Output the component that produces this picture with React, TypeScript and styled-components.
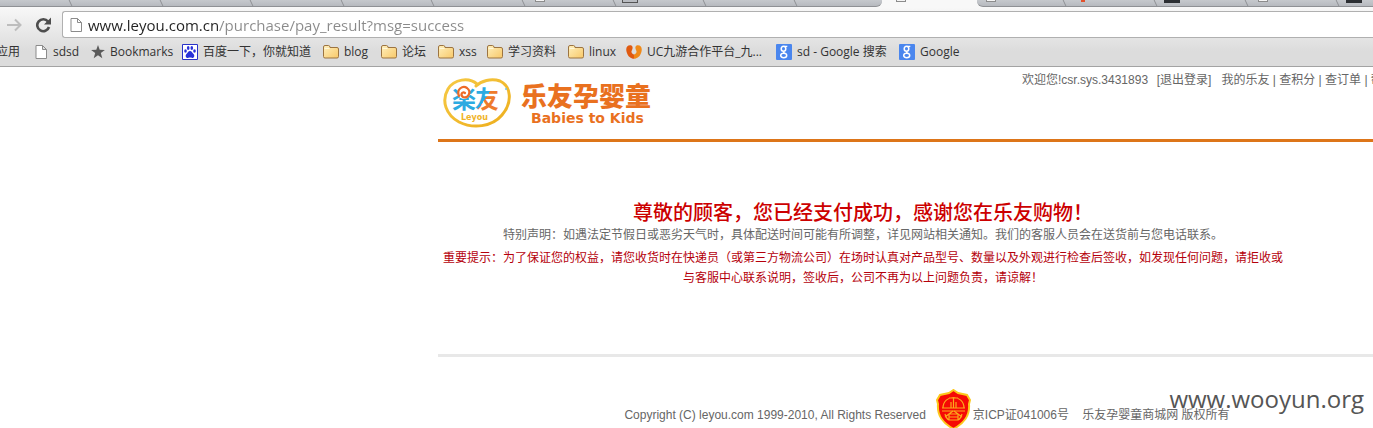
import React from "react";
import styled, { createGlobalStyle } from "styled-components";

const GlobalStyle = createGlobalStyle`
  * { box-sizing: border-box; }
  body {
    margin: 0;
    background: #fff;
    color: #666;
    font: 12px/20px "Liberation Sans", "Noto Sans CJK SC", sans-serif;
    overflow: hidden;
  }
  h1, p { margin: 0; font-weight: 400; }
`;

const uiFont = `"Open Sans", "Noto Sans CJK SC", sans-serif`;

/* Browser chrome */

const TabStrip = styled.div`
  display: flex;
  height: 7px;
  overflow: hidden;
  background: #f8f8f8;
`;

const Tab = styled.div<{ $width: number; $active?: boolean; $indent?: number; $corner?: string }>`
  position: relative;
  flex: none;
  width: ${(p) => p.$width}px;
  height: 7px;
  padding-left: ${(p) => p.$indent ?? 18}px;
  background: ${(p) => (p.$active ? "#f8f8f8" : "linear-gradient(#c6c9cd, #b7babf)")};
  border-bottom: ${(p) => (p.$active ? "0" : "1px solid #8f9195")};
  border-radius: ${(p) => p.$corner ?? "0"};
  &::after {
    content: "";
    display: ${(p) => (p.$active || p.$corner === "0 0 6px 0" ? "none" : "block")};
    position: absolute;
    right: 0;
    top: 0;
    width: 4px;
    height: 6px;
    border-left: 1px solid #8f9195;
    transform: skewX(25deg);
  }
`;

const TabIcon = styled.div<{ $kind: "page" | "dark" | "frame" | "red" }>`
  width: ${(p) => (p.$kind === "page" ? 10 : p.$kind === "red" ? 4 : 16)}px;
  height: ${(p) => (p.$kind === "dark" || p.$kind === "frame" ? 3 : 2)}px;
  background: ${(p) => ({ page: "#f5f5f5", dark: "#2c2f33", frame: "#b9bcc1", red: "#e2512c" })[p.$kind]};
  border: solid ${(p) => (p.$kind === "frame" ? "#555" : "#8c8c8c")};
  border-width: ${(p) => (p.$kind === "page" || p.$kind === "frame" ? "0 1px 1px" : "0")};
`;

const Toolbar = styled.div`
  height: 60px;
  padding-top: 4px;
  background: linear-gradient(#f8f8f8, #dcdcdc 75%);
  border-bottom: 1px solid #a3a3a3;
  font-family: ${uiFont};
`;

const AddressRow = styled.div`
  display: flex;
  align-items: center;
  height: 27px;
  padding-left: 6px;
`;

const ToolButton = styled.button`
  display: flex;
  width: 29px;
  padding: 0;
  border: 0;
  background: none;
`;

const AddressField = styled.label`
  flex: 1;
  display: flex;
  align-items: center;
  gap: 5px;
  height: 27px;
  margin-left: -2px;
  padding-left: 7px;
  background: #fff;
  border: 1px solid #b0b0b0;
  border-right: 0;
  border-radius: 3px 0 0 3px;
`;

const AddressInput = styled.input`
  flex: 1;
  height: 24px;
  padding: 0;
  border: 0;
  outline: 0;
  font: 15px/24px ${uiFont};
  color: transparent;
  background: linear-gradient(90deg, #222 130px, #8a8a8a 130px);
  -webkit-background-clip: text;
  background-clip: text;
`;

const BookmarkBar = styled.nav`
  display: flex;
  align-items: center;
  gap: 12px;
  height: 28px;
  overflow: hidden;
`;

const Bookmark = styled.a<{ $width: number; $clipStart?: boolean }>`
  flex: none;
  display: flex;
  align-items: center;
  justify-content: ${(p) => (p.$clipStart ? "flex-end" : "flex-start")};
  gap: 5px;
  width: ${(p) => p.$width}px;
  padding-right: ${(p) => (p.$clipStart ? 3 : 0)}px;
  color: #333;
  font-size: 12px;
  line-height: 20px;
  white-space: nowrap;
  text-decoration: none;
  svg { flex: none; }
`;

/* Shop page */

const Page = styled.div`
  padding-left: 438px;
`;

const Header = styled.header`
  display: flex;
  justify-content: space-between;
  height: 75px;
  border-bottom: 3px solid #dd7519;
`;

const LogoLink = styled.a`
  display: block;
  flex: none;
  height: 72px;
`;

const AccountBar = styled.nav`
  display: flex;
  flex: none;
  width: 351px;
  padding-top: 3px;
  overflow: hidden;
  white-space: pre;
  a { color: inherit; text-decoration: none; }
`;

const UserName = styled.span`
  padding-right: 2px;
`;

const Message = styled.main`
  max-width: 850px;
  height: 212px;
  padding-top: 60px;
  text-align: center;
`;

const Title = styled.h1`
  color: #c00;
  font-size: 20px;
  line-height: 22px;
  font-weight: 500;
`;

const Notice = styled.p`
  line-height: 22px;
`;

const Warning = styled.p`
  padding-top: 2px;
  color: #b5000b;
`;

const Footer = styled.footer`
  position: relative;
  display: flex;
  justify-content: center;
  height: 74px;
  padding: 32px 0 0 43px;
  border-top: 3px solid #e8e8e8;
  overflow: hidden;
  white-space: pre;
`;

const FooterText = styled.span`
  padding-top: 16px;
`;

const Seal = styled.svg`
  flex: none;
  margin: 0 2px 0 10px;
`;

const Watermark = styled.div`
  position: absolute;
  right: 9px;
  top: 24px;
  color: #555;
  font: 24px/36px ${uiFont};
`;

const PageIcon = () => (
  <svg width="13" height="16" viewBox="0 0 13 16" fill="#fff" stroke="#8b8b8b">
    <path d="M1 1.5h6.5l4 4v9H1zM7.500 1.500v4h4" />
  </svg>
);

const FolderIcon = () => (
  <svg width="16" height="14" viewBox="0 0 16 14">
    <defs>
      <linearGradient id="folder" x1="0" y1="0" x2="1" y2="1">
        <stop offset="0" stopColor="#fff0bd" />
        <stop offset="1" stopColor="#f8c868" />
      </linearGradient>
    </defs>
    <path d="M.5 11.500V2Q.5.500 2 .5h3.500Q7 .5 7 2.500h7Q15.500 2.500 15.500 4v7.500Q15.500 13 14 13H2Q.5 13 .5 11.500z" fill="url(#folder)" stroke="#9c7441" />
    <path d="M1.500 3.500h5" stroke="#fff8dc" />
  </svg>
);

const StarIcon = () => (
  <svg width="14" height="14" viewBox="0 0 14 14" fill="#5a5a5a">
    <path d="M7 0l1.700 4.800 5.200.1-4.100 3.200 1.500 5.100L7 10.200l-4.300 3 1.500-5.100L.1 4.900l5.200-.1z" />
  </svg>
);

const PawIcon = () => (
  <svg width="16" height="16" viewBox="0 0 16 16">
    <path d="M.5.5h15v15H.5z" fill="#fff" stroke="#2932c8" />
    <g fill="#2932d8">
      <ellipse cx="3.500" cy="7" rx="1.300" ry="1.800" />
      <ellipse cx="6.200" cy="4" rx="1.300" ry="1.900" />
      <ellipse cx="9.800" cy="4" rx="1.300" ry="1.900" />
      <ellipse cx="12.500" cy="7" rx="1.300" ry="1.800" />
      <path d="M8 7c1.700 0 2.200 1.800 3.500 3 1.500 1.500.8 4-1.200 4-1 0-1.300-.4-2.300-.4s-1.300.4-2.300.4c-2 0-2.700-2.500-1.200-4C5.800 8.800 6.300 7 8 7z" />
    </g>
  </svg>
);

const UcIcon = () => (
  <svg width="16" height="14" viewBox="0 0 16 14">
    <path d="M5 .3C1-.3-.5 3 .6 7 1.800 11.500 5 13.800 8 13.800V9.500C5.500 9 5 7 5.800 5.500 7 3.500 7 1 5 .3z" fill="#e05a10" />
    <path d="M11 .3c4-.6 5.500 2.700 4.400 6.700C14.200 11.500 11 13.800 8 13.800V9.500c2.500-.5 3-2.500 2.200-4C9 3.500 9 1 11 .3z" fill="#f08a18" />
  </svg>
);

const GoogleIcon = () => (
  <svg width="16" height="16" viewBox="0 0 16 16">
    <rect width="16" height="16" rx="1" fill="#4a86ee" />
    <g fill="none" stroke="#fff">
      <ellipse cx="7.500" cy="4.800" rx="2.300" ry="2.500" strokeWidth="1.500" />
      <path d="M8.500 2.300h2.800M8 7.300c-1.500 1 .5 1.500 1.500 2.500" strokeWidth="1.300" />
      <ellipse cx="7.700" cy="11.500" rx="3" ry="2.200" strokeWidth="1.500" />
    </g>
  </svg>
);

const icons = {
  none: () => null,
  page: () => <PageIcon />,
  star: () => <StarIcon />,
  paw: () => <PawIcon />,
  folder: () => <FolderIcon />,
  uc: () => <UcIcon />,
  google: () => <GoogleIcon />,
};

const bookmarks: { icon: keyof typeof icons; label: string; width: number }[] = [
  { icon: "none", label: "应用", width: 23 },
  { icon: "page", label: "sdsd", width: 44 },
  { icon: "star", label: "Bookmarks", width: 79 },
  { icon: "paw", label: "百度一下，你就知道", width: 129 },
  { icon: "folder", label: "blog", width: 46 },
  { icon: "folder", label: "论坛", width: 45 },
  { icon: "folder", label: "xss", width: 37 },
  { icon: "folder", label: "学习资料", width: 69 },
  { icon: "folder", label: "linux", width: 46 },
  { icon: "uc", label: "UC九游合作平台_九...", width: 138 },
  { icon: "google", label: "sd - Google 搜索", width: 111 },
  { icon: "google", label: "Google", width: 60 },
];

type TabData = {
  width: number;
  icon?: "page" | "dark" | "frame" | "red";
  indent?: number;
  active?: boolean;
  corner?: string;
};

const tabs: TabData[] = [
  { width: 75 },
  { width: 91 },
  { width: 90 },
  { width: 91 },
  { width: 90 },
  { width: 91 },
  { width: 91, icon: "page", indent: 7 },
  { width: 90, icon: "frame", indent: 3 },
  { width: 91 },
  { width: 82, corner: "0 0 6px 0" },
  { width: 95, icon: "page", indent: 14, active: true },
  { width: 92, icon: "page", indent: 9, corner: "0 0 0 6px" },
  { width: 91, icon: "red", indent: 12 },
  { width: 91, icon: "dark", indent: 4 },
  { width: 91, icon: "page", indent: 7 },
  { width: 91, icon: "dark", indent: 4 },
];

const Logo = () => (
  <svg width="220" height="72" viewBox="0 0 220 72" role="img" aria-label="乐友孕婴童">
    <defs>
      <linearGradient id="ring" x1="0" y1="0" x2="1" y2="1">
        <stop offset="0" stopColor="#f6c944" />
        <stop offset="1" stopColor="#edae1d" />
      </linearGradient>
      <linearGradient id="you" x1="0" y1="0" x2="1" y2="1">
        <stop offset=".48" stopColor="#2daae1" />
        <stop offset=".48" stopColor="#ee7a2c" />
      </linearGradient>
    </defs>
    <path
      fill="none"
      stroke="url(#ring)"
      strokeWidth="3"
      strokeLinecap="round"
      d="M39 17C31 10 16 12 10 22C3 34 8 48 21 55C35 62 54 60 64 48C75 35 73 19 62 14C53 11 43 14 38 19"
    />
    <g fontWeight="700" fontSize="24">
      <text x="14" y="41" fill="#2daae1" fontFamily='"Noto Sans CJK JP", sans-serif'>楽</text>
      <text x="37" y="41" fill="url(#you)" fontFamily='"Noto Sans CJK SC", sans-serif'>友</text>
    </g>
    <circle cx="26" cy="26" r="6" fill="#fff" />
    <path d="M21 29C18 22 25 18 29 21C34 25 30 32 25 30C22 28 24 24 27 26" fill="none" stroke="#ee6a26" strokeWidth="2.200" strokeLinecap="round" />
    <circle cx="68" cy="22" r="1" fill="#77c5e8" />
    <text x="23" y="53" fill="#f0b429" fontSize="8" fontWeight="700" fontFamily='"DejaVu Sans", sans-serif'>Leyou</text>
    <text x="83" y="39" fill="#e9711f" fontSize="26" fontWeight="900" fontFamily='"Noto Sans CJK SC", sans-serif'>乐友孕婴童</text>
    <text x="93" y="56" fill="#e9711f" fontSize="14" fontWeight="700" fontFamily='"DejaVu Sans", sans-serif'>Babies to Kids</text>
  </svg>
);

export default function App() {
  return (
    <>
      <GlobalStyle />
      <TabStrip>
        {tabs.map((t, i) => (
          <Tab key={i} $width={t.width} $indent={t.indent} $active={t.active} $corner={t.corner}>
            {t.icon && <TabIcon $kind={t.icon} />}
          </Tab>
        ))}
      </TabStrip>
      <Toolbar>
        <AddressRow>
          <ToolButton aria-label="Forward">
            <svg width="17" height="16" viewBox="0 0 17 16" fill="none" stroke="#bdbdbd" strokeWidth="2">
              <path d="M1 8h13M9 2.500L14.500 8 9 13.500" />
            </svg>
          </ToolButton>
          <ToolButton aria-label="Reload">
            <svg width="17" height="16" viewBox="0 0 17 16">
              <path d="M13 4.500A6 6 0 1 0 14 10" fill="none" stroke="#4e4e4e" strokeWidth="2.600" />
              <path d="M16 .5v7H9z" fill="#4e4e4e" />
            </svg>
          </ToolButton>
          <AddressField>
            <PageIcon />
            <AddressInput aria-label="Address" defaultValue="www.leyou.com.cn/purchase/pay_result?msg=success" />
          </AddressField>
        </AddressRow>
        <BookmarkBar>
          {bookmarks.map((b, i) => (
            <Bookmark key={i} href="#" $width={b.width} $clipStart={b.icon === "none"}>
              {icons[b.icon]()}
              {b.label}
            </Bookmark>
          ))}
        </BookmarkBar>
      </Toolbar>
      <Page>
        <Header>
          <LogoLink href="#"><Logo /></LogoLink>
          <AccountBar>
            <UserName>欢迎您!csr.sys.3431893{"  "}</UserName>
            <a href="#">[退出登录]</a>
            <span>{"   "}</span>
            <a href="#">我的乐友</a>
            <span> | </span>
            <a href="#">查积分</a>
            <span> | </span>
            <a href="#">查订单</a>
            <span> | </span>
            <a href="#">帮助</a>
          </AccountBar>
        </Header>
        <Message>
          <Title>尊敬的顾客，您已经支付成功，感谢您在乐友购物！</Title>
          <Notice>特别声明：如遇法定节假日或恶劣天气时，具体配送时间可能有所调整，详见网站相关通知。我们的客服人员会在送货前与您电话联系。</Notice>
          <Warning>
            重要提示：为了保证您的权益，请您收货时在快递员（或第三方物流公司）在场时认真对产品型号、数量以及外观进行检查后签收，如发现任何问题，请拒收或与客服中心联系说明，签收后，公司不再为以上问题负责，请谅解！
          </Warning>
        </Message>
        <Footer>
          <FooterText>Copyright (C) leyou.com 1999-2010, All Rights Reserved</FooterText>
          <Seal width="35" height="40" viewBox="0 0 35 40">
            <path d="M17.500 1L22 4l9 2 3 5-1 4c1 12-5 19-15.500 25C7 34 1 27 2 15l-1-4 3-5 9-2z" fill="#f50a05" stroke="#fcc81c" strokeWidth="2" />
            <g fill="none" stroke="#fbab1c" strokeWidth="1.200">
              <path d="M7 19C7 5 28 5 28 19M13 9h9M17.500 9v10M6 19h23M6 22h23M15 13v6M20 13v6" />
              <path d="M17 22L9 28M18 22l8 6M13 25h9v6h-9zM13 28h9M9 25c1 4 2 5 4 6M26 25c-1 4-2 5-4 6" />
            </g>
          </Seal>
          <FooterText>京ICP证041006号{"    "}乐友孕婴童商城网 版权所有</FooterText>
          <Watermark>www.wooyun.org</Watermark>
        </Footer>
      </Page>
    </>
  );
}
